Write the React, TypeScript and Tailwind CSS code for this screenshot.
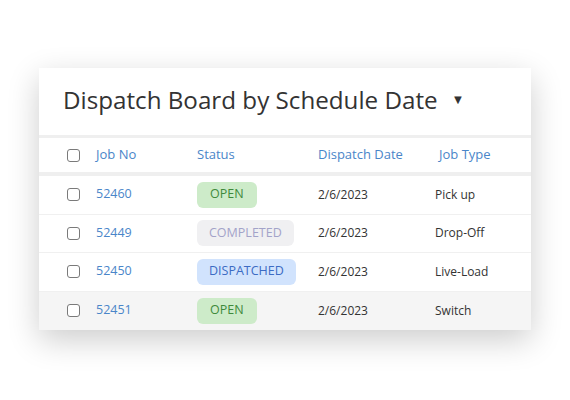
import React from "react";

const rows = [
  { no: "52460", status: "OPEN", date: "2/6/2023", type: "Pick up" },
  { no: "52449", status: "COMPLETED", date: "2/6/2023", type: "Drop-Off" },
  { no: "52450", status: "DISPATCHED", date: "2/6/2023", type: "Live-Load" },
  { no: "52451", status: "OPEN", date: "2/6/2023", type: "Switch" },
];

function Badge({ s }: { s: string }) {
  if (s === "OPEN")
    return <span className="inline-flex h-[26px] items-center rounded-md bg-[#cdebc9] px-[13px] text-[12.5px] text-[#3f8a3c]">OPEN</span>;
  if (s === "COMPLETED")
    return <span className="inline-flex h-[26px] items-center rounded-md bg-[#f0f0f2] px-[12px] text-[12.5px] text-[#a3a3c9]">COMPLETED</span>;
  return <span className="inline-flex h-[26px] items-center rounded-md bg-[#d1e3fd] px-[12px] text-[12.5px] text-[#3c6bc4]">DISPATCHED</span>;
}

function Box() {
  return <span className="block h-[13px] w-[13px] rounded-[3px] border-[1.5px] border-[#7a7a7a] bg-white" />;
}

export default function App() {
  return (
    <div className="h-[400px] w-[570px] bg-white pl-[39px] pt-[68px]" style={{ fontFamily: '"Open Sans", sans-serif' }}>
      <div className="w-[492px] bg-white shadow-[0_10px_30px_rgba(0,0,0,0.2)]">
        <div className="flex h-[67px] items-center pb-[3px] pl-[24px] text-[24.2px] text-[#333]">
          <span>Dispatch Board by Schedule Date</span>
          <span className="ml-[14px] text-[13px] text-[#333]">▼</span>
        </div>
        <div className="h-[3px] bg-[#efefef]" />
        <div className="flex h-[34px] items-center text-[13px] text-[#4a86c9]">
          <div className="w-[57px] pl-[28px]"><Box /></div>
          <div className="w-[101px]">Job No</div>
          <div className="w-[121px]">Status</div>
          <div className="w-[121px]">Dispatch Date</div>
          <div>Job Type</div>
        </div>
        <div className="h-[4px] bg-[#efefef]" />
        {rows.map((r, i) => (
          <div
            key={r.no}
            className={`flex h-[38.5px] items-center text-[12px] ${i === 3 ? "bg-[#f5f5f5]" : "bg-white border-b border-[#f0f0f0]"}`}
          >
            <div className="w-[57px] pl-[28px]"><Box /></div>
            <div className="w-[101px] text-[12.5px] text-[#4a86c9]">{r.no}</div>
            <div className="w-[121px]"><Badge s={r.status} /></div>
            <div className="w-[117px] text-[#333]">{r.date}</div>
            <div className="text-[#333]">{r.type}</div>
          </div>
        ))}
      </div>
    </div>
  );
}
